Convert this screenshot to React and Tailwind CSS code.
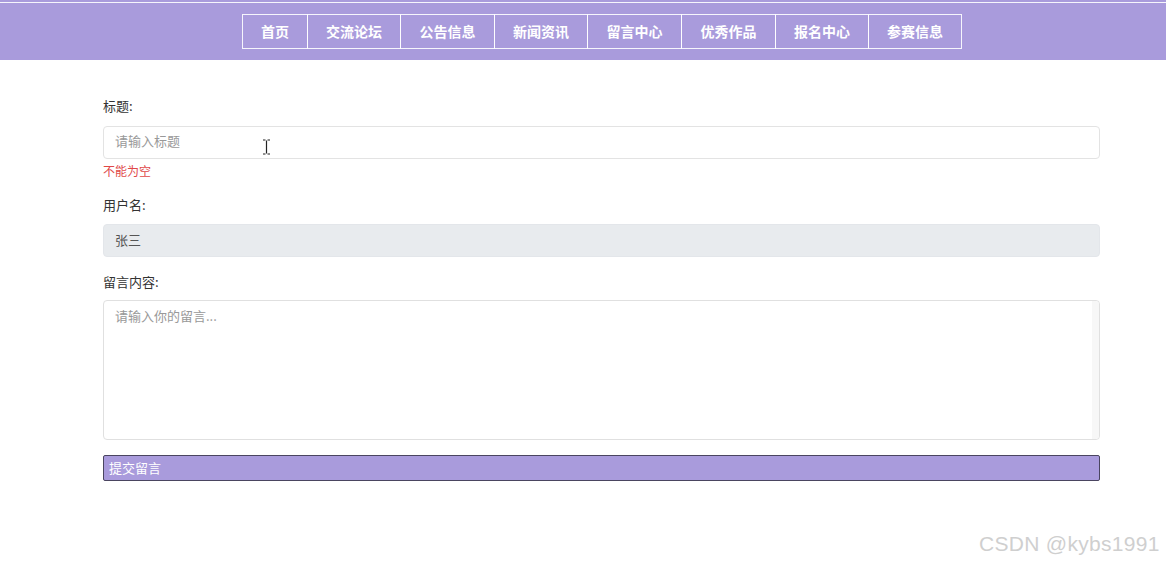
const navItems = [
  { label: '首页', w: 'w-[66px]' },
  { label: '交流论坛', w: 'w-[94px] -ml-px' },
  { label: '公告信息', w: 'w-[95px] -ml-px' },
  { label: '新闻资讯', w: 'w-[94px] -ml-px' },
  { label: '留言中心', w: 'w-[95px] -ml-px' },
  { label: '优秀作品', w: 'w-[95px] -ml-px' },
  { label: '报名中心', w: 'w-[94px] -ml-px' },
  { label: '参赛信息', w: 'w-[94px] -ml-px' },
];

export default function App() {
  return (
    <div className="relative w-[1166px] h-[561px] bg-white overflow-hidden" style={{ fontFamily: '"Noto Sans CJK SC", "Liberation Sans", sans-serif' }}>
      {/* header */}
      <div className="bg-[#a99bdc] h-[60px] pt-[2px]">
        <div className="h-[1px] bg-white/90" />
        <nav className="flex pl-[242px] pt-[11px]">
          {navItems.map((item) => (
            <a
              key={item.label}
              className={`h-[35px] flex items-center justify-center border border-white/90 text-white text-[14px] font-bold ${item.w}`}
            >
              {item.label}
            </a>
          ))}
        </nav>
      </div>

      {/* form */}
      <div className="ml-[103px] w-[997px] pt-[37px]">
        <label className="block text-[13px] text-[#333] leading-[18px]">标题:</label>
        <div className="mt-[11px] h-[33px] border border-[#e3e3e3] rounded-[4px] flex items-center px-[11px] pb-[3px] text-[13px] text-[#999]">
          请输入标题
        </div>
        <p className="mt-[4px] text-[12px] text-[#e04848] leading-[16px]">不能为空</p>

        <label className="block mt-[17px] text-[13px] text-[#333] leading-[18px]">用户名:</label>
        <div className="mt-[10px] h-[33px] border border-[#e3e6ea] bg-[#e8ebee] rounded-[4px] flex items-center px-[11px] pb-[2px] text-[13px] text-[#555]">
          张三
        </div>

        <label className="block mt-[16px] text-[13px] text-[#333] leading-[18px]">留言内容:</label>
        <div className="mt-[9px] h-[140px] border border-[#e0e0e0] rounded-[4px] flex">
          <div className="flex-1 px-[11px] pt-[5px] text-[13px] text-[#999]">请输入你的留言...</div>
          <div className="w-[7px] bg-[#f7f7f7] rounded-r-[4px]" />
        </div>

        <button className="mt-[15px] w-full h-[26px] bg-[#a99bdc] border border-[#4a4560] rounded-[2px] text-left pl-[5px] text-[13px] text-white">
          提交留言
        </button>
      </div>

      {/* text cursor */}
      <svg className="absolute left-[262px] top-[139px]" width="9" height="16" viewBox="0 0 9 16">
        <path d="M1 1h2.5M5.5 1H8M4.5 1.5v13M1 15h2.5M5.5 15H8" stroke="#222" strokeWidth="1.2" fill="none" />
      </svg>

      {/* watermark */}
      <div className="absolute left-[979px] top-[528px] text-[21px] text-[#cfcfcf] tracking-[0.3px]" style={{ fontFamily: '"Liberation Sans", Arial, sans-serif' }}>
        CSDN @kybs1991
      </div>
    </div>
  );
}
